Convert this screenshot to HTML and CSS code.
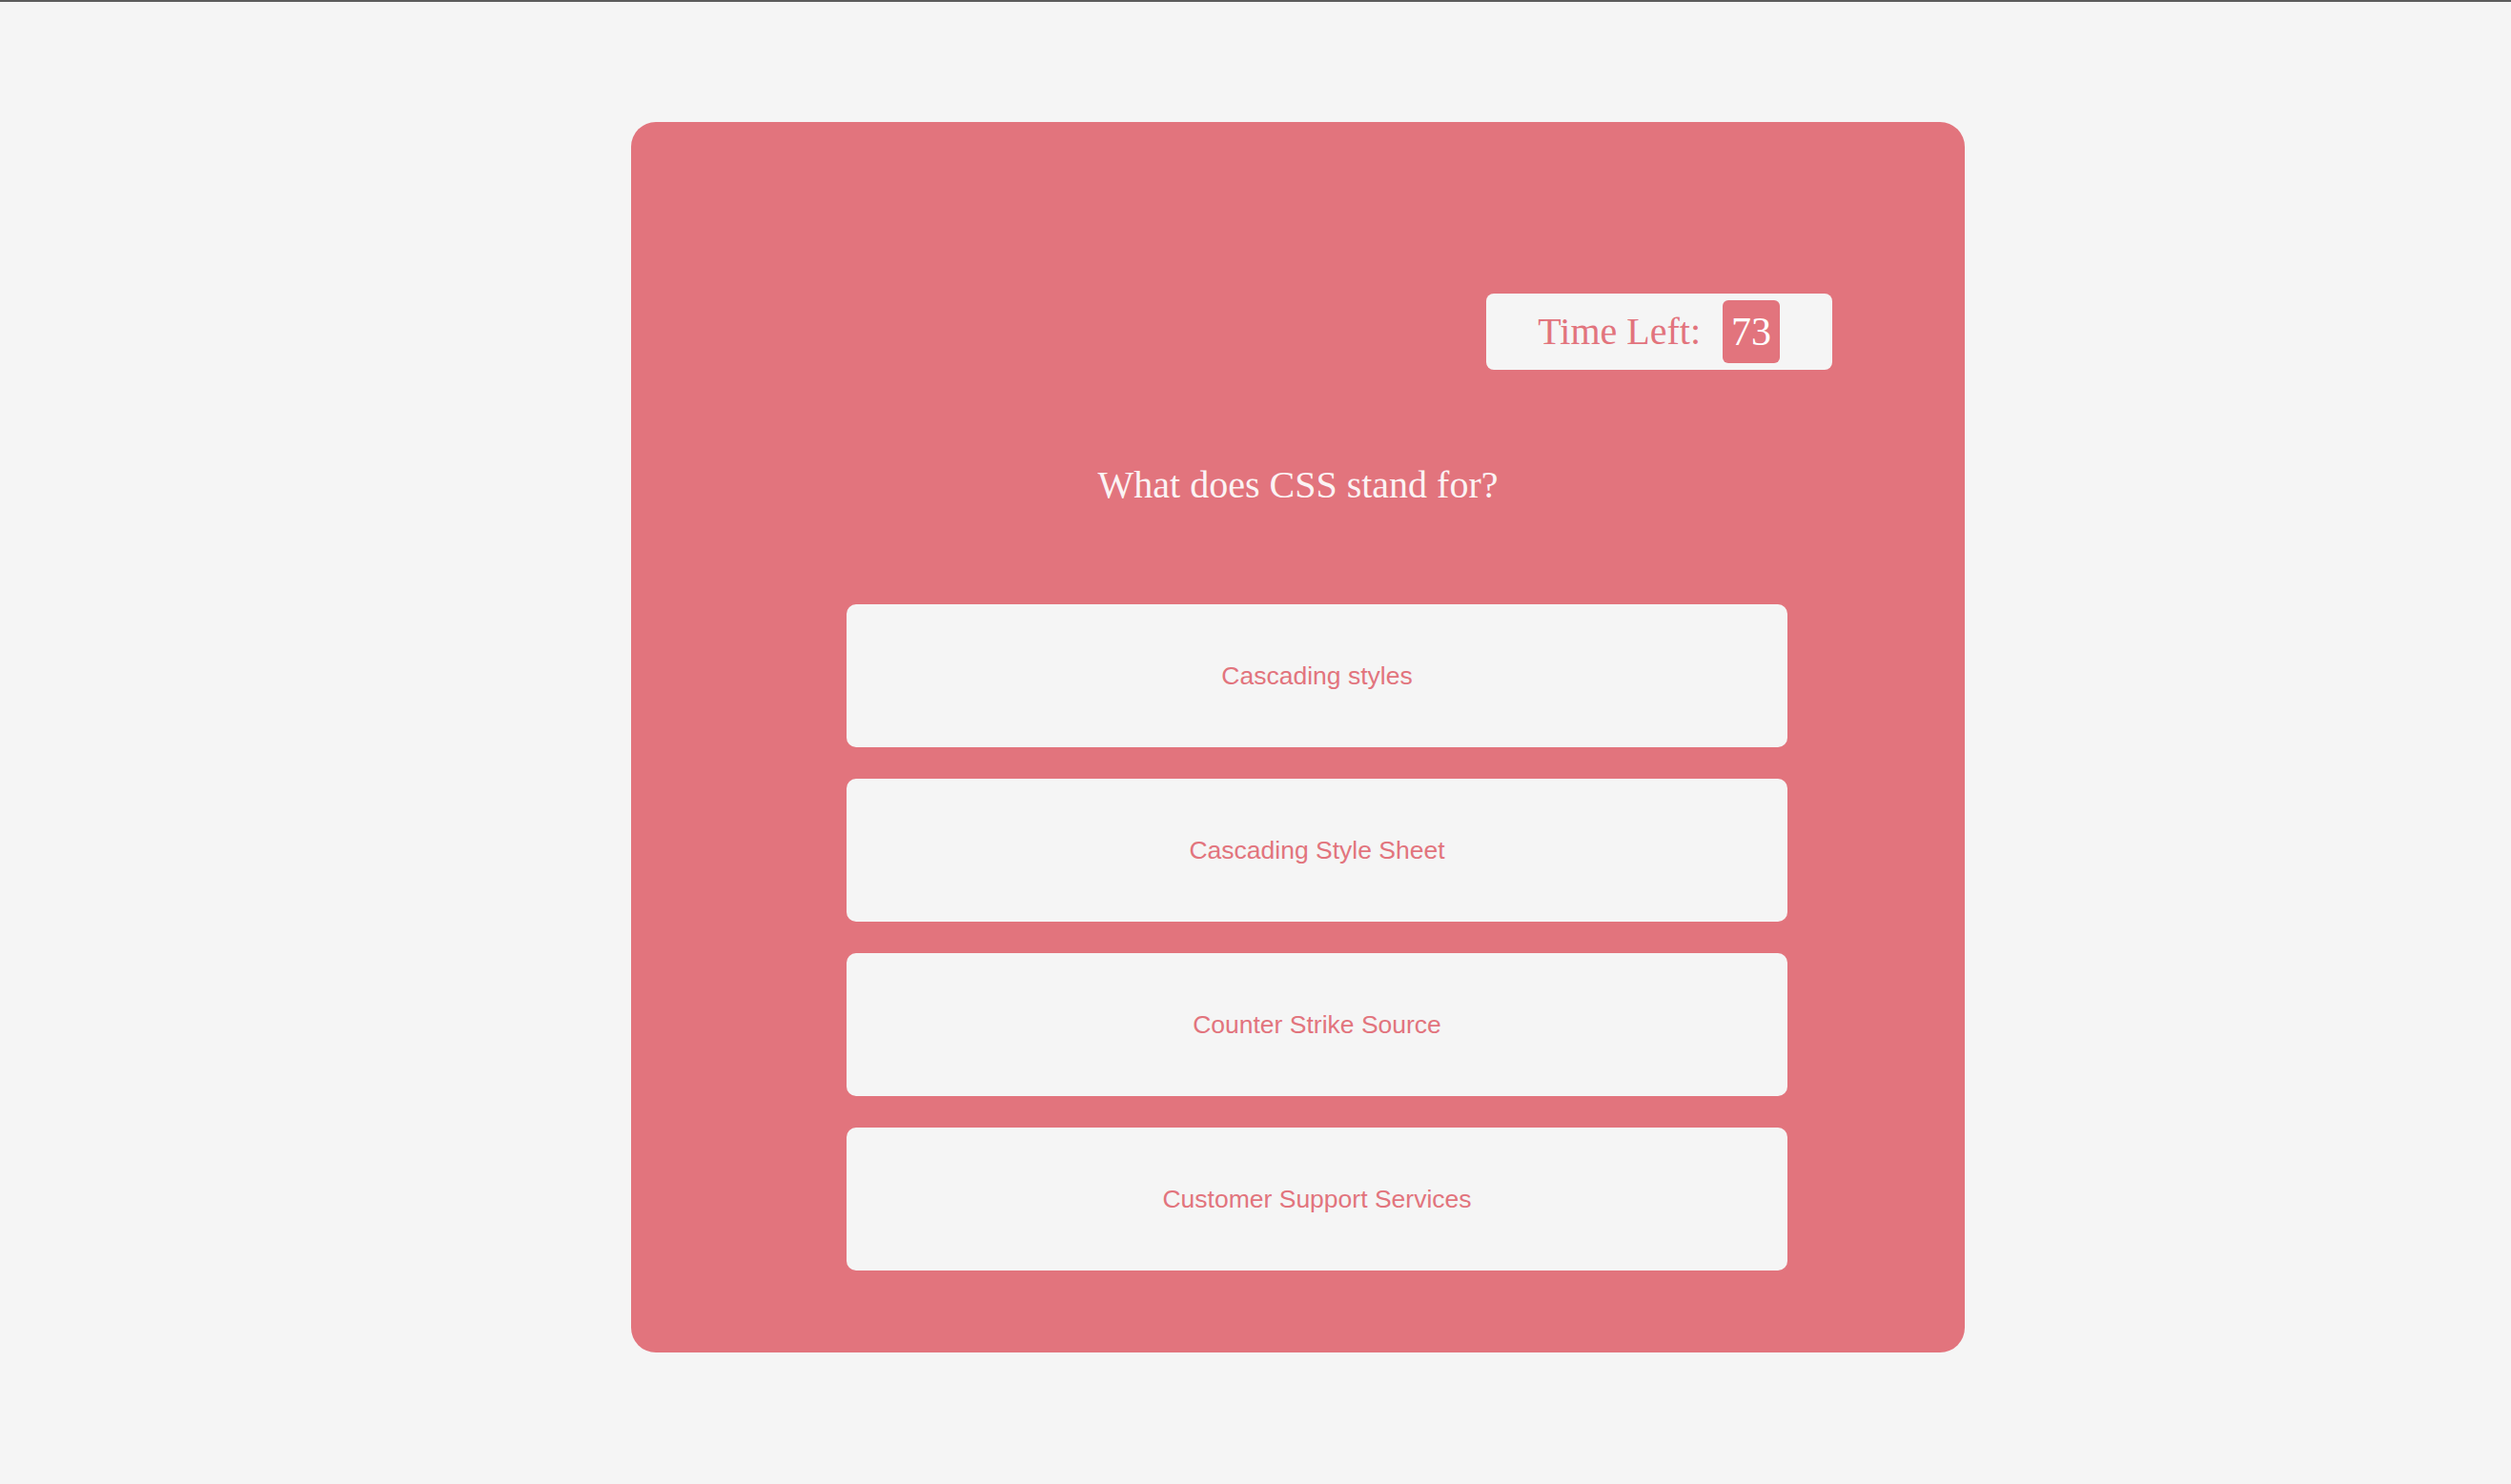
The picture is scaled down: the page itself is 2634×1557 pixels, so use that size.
FILE: index.html
```html
<!DOCTYPE html>
<html lang="en">
<head>
<meta charset="utf-8">
<title>Quiz</title>
<link rel="stylesheet" href="styles.css">
</head>
<body>
<main class="quiz">
  <div class="timer-row">
    <div class="timer">
      <span class="timer-label">Time Left:</span>
      <span class="timer-value">73</span>
    </div>
  </div>
  <h2 class="question">What does CSS stand for?</h2>
  <ul class="answers">
    <li><button class="answer">Cascading styles</button></li>
    <li><button class="answer">Cascading Style Sheet</button></li>
    <li><button class="answer">Counter Strike Source</button></li>
    <li><button class="answer">Customer Support Services</button></li>
  </ul>
</main>
</body>
</html>
```

FILE: styles.css
```css
html, body {
  margin: 0;
  padding: 0;
}
body {
  background: #f5f5f5;
  border-top: 2px solid #5c5c5c;
  min-height: 1555px;
  font-family: "Liberation Serif", "Times New Roman", serif;
}
.quiz {
  box-sizing: border-box;
  width: 1399px;
  margin: 126px 0 0 662px;
  padding: 180px 0 86px 0;
  background: #e2747d;
  border-radius: 26px;
}
.timer-row {
  display: flex;
  justify-content: flex-end;
  padding-right: 139px;
}
.timer {
  display: flex;
  align-items: center;
  gap: 23px;
  padding: 7px 55px 7px 54px;
  background: #f5f5f5;
  border-radius: 8px;
}
.timer-label {
  font-size: 40px;
  line-height: 48px;
  color: #e2747d;
}
.timer-value {
  font-size: 42px;
  line-height: 48px;
  padding: 9px;
  min-width: 42px;
  text-align: center;
  background: #e2747d;
  color: #ffffff;
  border-radius: 6px;
}
.question {
  margin: 100px 0 0 0;
  font-size: 40px;
  font-weight: normal;
  line-height: 41px;
  text-align: center;
  color: #fbf3f4;
}
.answers {
  list-style: none;
  margin: 105px 0 0 0;
  padding: 0 0 0 40px;
  display: flex;
  flex-direction: column;
  align-items: center;
  gap: 33px;
}
.answers li {
  display: block;
}
.answer {
  display: block;
  width: 987px;
  height: 150px;
  border: none;
  border-radius: 10px;
  background: #f5f5f5;
  color: #e2747d;
  font-family: "Liberation Sans", Arial, sans-serif;
  font-size: 26.5px;
  text-align: center;
  cursor: pointer;
}
```
